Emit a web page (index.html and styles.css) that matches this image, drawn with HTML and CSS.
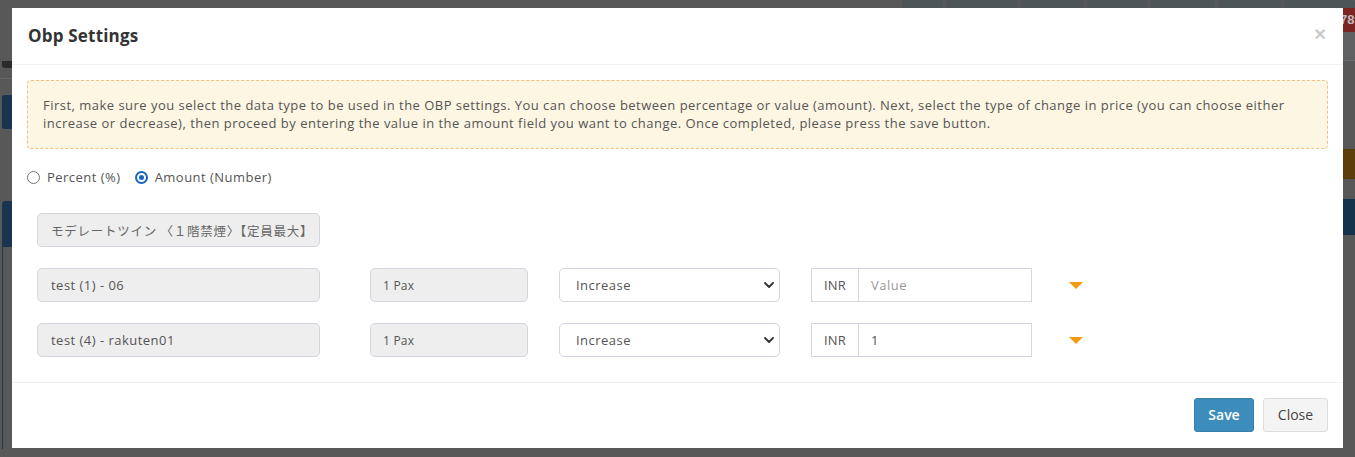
FILE: index.html
```html
<!DOCTYPE html>
<html lang="en">
<head>
<meta charset="utf-8">
<title>Obp Settings</title>
<link rel="stylesheet" href="styles.css">
</head>
<body>
<div class="page">
  <div class="topbar">
    <div class="tabs-spacer"></div>
    <div class="tab t1"></div>
    <div class="tab t2"></div>
    <div class="tab t3"></div>
    <div class="tab t4"></div>
    <div class="tab t5"></div>
    <div class="tab t6"></div>
    <div class="tab t7"></div>
  </div>
  <div class="sides">
    <div class="side-left">
      <div class="sl-bar"></div>
      <div class="sl-rule"></div>
      <div class="sl-block"></div>
      <div class="sl-panel"></div>
    </div>
    <div class="side-right">
      <div class="sr-badge">789</div>
      <div class="sr-light"></div>
      <div class="sr-brown"></div>
      <div class="sr-blue"></div>
    </div>
  </div>
</div>

<div class="modal">
  <div class="modal-header">
    <h4 class="modal-title">Obp Settings</h4>
    <span class="modal-close">&times;</span>
  </div>
  <div class="modal-body">
    <div class="alert">First, make sure you select the data type to be used in the OBP settings. You can choose between percentage or value (amount). Next, select the type of change in price (you can choose either increase or decrease), then proceed by entering the value in the amount field you want to change. Once completed, please press the save button.</div>
    <div class="radios">
      <label class="radio"><span class="dot"></span>Percent (%)</label>
      <label class="radio"><span class="dot on"></span>Amount (Number)</label>
    </div>
    <div class="rows">
      <div class="row">
        <div class="field f-name jp">モデレートツイン 〈１階禁煙〉【定員最大】</div>
      </div>
      <div class="row">
        <div class="field f-name">test (1) - 06</div>
        <div class="field f-pax">1 Pax</div>
        <div class="select"><span>Increase</span><svg class="chev" viewBox="0 0 10 6" width="10" height="6"><path d="M1 1l4 4 4-4" fill="none" stroke="#333" stroke-width="1.8" stroke-linecap="round" stroke-linejoin="round"/></svg></div>
        <div class="igroup"><span class="addon">INR</span><span class="ival ph">Value</span></div>
        <span class="caret"></span>
      </div>
      <div class="row">
        <div class="field f-name">test (4) - rakuten01</div>
        <div class="field f-pax">1 Pax</div>
        <div class="select"><span>Increase</span><svg class="chev" viewBox="0 0 10 6" width="10" height="6"><path d="M1 1l4 4 4-4" fill="none" stroke="#333" stroke-width="1.8" stroke-linecap="round" stroke-linejoin="round"/></svg></div>
        <div class="igroup"><span class="addon">INR</span><span class="ival">1</span></div>
        <span class="caret"></span>
      </div>
    </div>
  </div>
  <div class="modal-footer">
    <button class="btn btn-save">Save</button>
    <button class="btn btn-close">Close</button>
  </div>
</div>
</body>
</html>
```
FILE: styles.css
```css
* { box-sizing: border-box; }
html, body { margin: 0; padding: 0; }
body {
  width: 1355px;
  height: 457px;
  overflow: hidden;
  background: #585858;
  font-family: "Open Sans", "Noto Sans CJK JP", sans-serif;
  color: #555;
  position: relative;
}

/* dimmed page behind the modal */
.page { display: flex; flex-direction: column; height: 457px; }
.topbar { display: flex; height: 8px; gap: 3px; }
.tabs-spacer { flex: 0 0 899px; }
.tab { background: #4e5557; border-radius: 3px 3px 0 0; height: 8px; }
.t1 { flex: 0 0 41px; }
.t2 { flex: 0 0 72px; }
.t3 { flex: 0 0 63px; }
.t4 { flex: 0 0 60px; }
.t5 { flex: 0 0 65px; }
.t6 { flex: 0 0 63px; }
.t7 { flex: 1; }
.sides { display: flex; justify-content: space-between; flex: 1; }
.side-left { width: 12px; display: flex; flex-direction: column; }
.sl-bar { height: 7px; margin-top: 53px; margin-left: 2px; background: #2b2b2b; border-radius: 0 0 0 3px; }
.sl-rule { height: 1px; margin-top: 10px; background: #666; }
.sl-block { height: 34px; margin-top: 16px; margin-left: 2px; background: #183550; border-radius: 3px 0 0 3px; }
.sl-panel { height: 248px; margin-top: 72px; margin-left: 2px; border-left: 1px solid #1d3a55; background: linear-gradient(#183550 0, #183550 46px, #585858 46px); border-radius: 3px 0 0 0; }
.side-right { width: 12px; display: flex; flex-direction: column; }
.sr-badge { height: 24px; background: #7c2424; color: #bbb; font: bold 13px "Liberation Sans", sans-serif; line-height: 24px; overflow: hidden; white-space: nowrap; text-indent: -3px; }
.sr-light { height: 29px; background: #5f6061; border-bottom: 1px solid #6a6a6a; }
.sr-brown { height: 30px; margin-top: 88px; background: #5b3e0a; }
.sr-blue { height: 36px; margin-top: 20px; background: #14324c; }

/* modal */
.modal {
  position: absolute;
  left: 12px;
  top: 8px;
  width: 1331px;
  height: 440px;
  background: #fff;
  display: flex;
  flex-direction: column;
}
.modal-header {
  height: 57px;
  border-bottom: 1px solid #f1f1f1;
  display: flex;
  align-items: center;
  justify-content: space-between;
  padding: 0 17px 2px 16px;
}
.modal-title {
  margin: 0;
  font-family: "Open Sans", sans-serif;
  font-size: 17px;
  font-weight: 700;
  color: #333;
  letter-spacing: 0.2px;
}
.modal-close {
  font-family: "Liberation Sans", sans-serif;
  font-size: 20px;
  font-weight: 700;
  color: #c9c9c9;
  line-height: 1;
  margin-top: -3px;
}
.modal-body { padding: 15px 15px 0 15px; flex: 1; letter-spacing: 0.48px; }
.alert {
  background: #fdf6e3;
  border: 1px dashed #f5be85;
  border-radius: 4px;
  padding: 15px 15px 16px 15px;
  font-size: 13px;
  line-height: 18px;
  color: #555;
}
.radios { display: flex; gap: 14px; margin-top: 17px; height: 22px; align-items: center; }
.radio { display: flex; align-items: center; font-size: 13px; color: #555; }
.dot {
  width: 13px; height: 13px; border-radius: 50%;
  border: 1px solid #777; margin-right: 7px; background: #fff;
  display: inline-flex; align-items: center; justify-content: center;
}
.dot.on { border: 2px solid #1565c0; }
.dot.on::after { content: ""; width: 5px; height: 5px; border-radius: 50%; background: #1565c0; }

.rows { padding: 25px 10px 0 10px; display: flex; flex-direction: column; gap: 21px; }
.row { display: flex; align-items: center; height: 34px; }
.field {
  height: 34px;
  background: #eee;
  border: 1px solid #d2d6de;
  border-radius: 5px;
  display: flex;
  align-items: center;
  padding-left: 13px;
  font-size: 13px;
  color: #555;
  white-space: nowrap;
}
.f-name { width: 283px; }
.jp { font-family: "Noto Sans CJK JP", sans-serif; font-size: 12.5px; color: #666; letter-spacing: 0.75px; }
.f-pax { width: 158px; margin-left: 50px; font-size: 12px; padding-left: 12px; letter-spacing: 0.2px; }
.select {
  width: 221px; height: 34px; margin-left: 31px;
  border: 1px solid #d2d6de; border-radius: 5px;
  display: flex; align-items: center; justify-content: space-between;
  padding: 0 5px 0 16px; font-size: 13px; color: #555;
}
.chev { display: block; }
.igroup { width: 221px; height: 34px; margin-left: 31px; display: flex; }
.addon {
  width: 48px; border: 1px solid #d2d6de;
  display: flex; align-items: center; justify-content: center;
  font-size: 13px; color: #555; letter-spacing: 0.2px;
}
.ival {
  flex: 1; border: 1px solid #d2d6de; border-left: 0;
  display: flex; align-items: center; padding-left: 12px;
  font-size: 13px; color: #555;
}
.ival.ph { color: #999; }
.caret {
  margin-left: 37px;
  width: 0; height: 0;
  border-left: 7px solid transparent;
  border-right: 7px solid transparent;
  border-top: 7px solid #f39c12;
}

.modal-footer {
  height: 66px;
  border-top: 1px solid #f1f1f1;
  display: flex; justify-content: flex-end; align-items: center;
  gap: 9px; padding: 0 15px 2px;
}
.btn {
  height: 34px; border-radius: 3px; font-family: "Open Sans", sans-serif; font-size: 14px;
  padding: 0; cursor: pointer;
}
.btn-save { width: 60px; background: #3c8dbc; border: 1px solid #367fa9; color: #fff; font-weight: 600; }
.btn-close { width: 65px; background: #f4f4f4; border: 1px solid #ddd; color: #444; }
```
